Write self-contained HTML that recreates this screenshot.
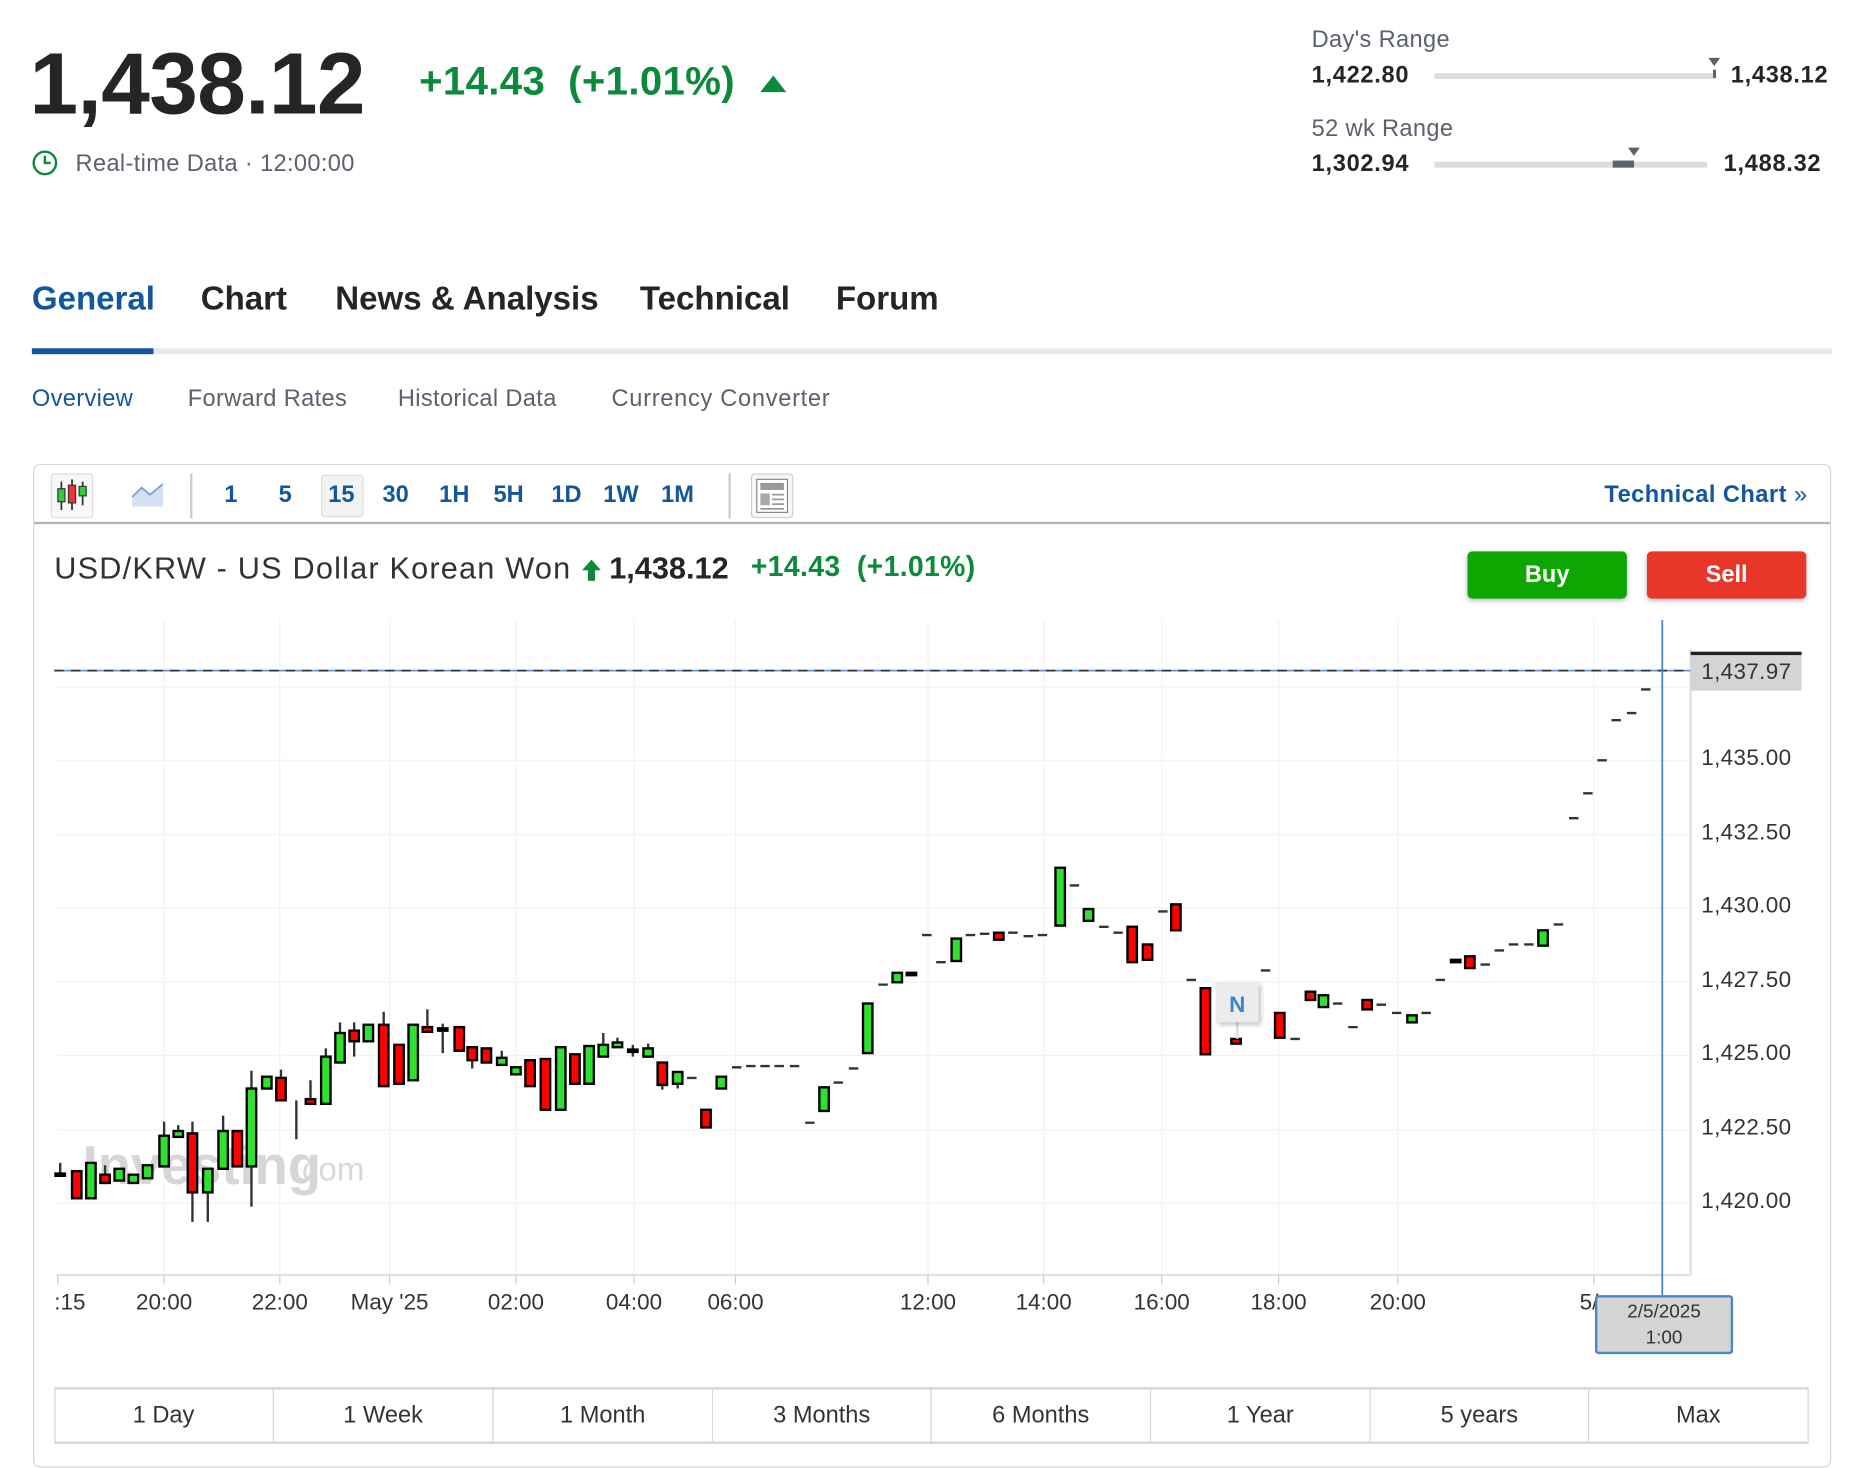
<!DOCTYPE html>
<html><head><meta charset="utf-8">
<style>
*{margin:0;padding:0;box-sizing:border-box}
html,body{width:1852px;height:1464px;overflow:hidden;background:#fff;font-family:"Liberation Sans",Arial,sans-serif}
#w{position:absolute;left:0;top:0;width:1569px;height:1240px;transform:scale(1.1806,1.1806);transform-origin:0 0}
.a{position:absolute;white-space:nowrap}
.gr{color:#0a8a3a}
.tab{font-size:28px;font-weight:bold;color:#232526;top:237px}
.sub{font-size:20px;color:#5b616e;top:327px;letter-spacing:0.3px}
.tf{font-size:20px;font-weight:bold;color:#1256a0;top:408px}
.yl{font-size:19px;color:#333;left:1441px;letter-spacing:0.3px}
.xl{font-size:19px;color:#333;top:1093px;transform:translateX(-50%)}
.pb{position:absolute;top:1176px;height:46px;border-right:1px solid #d6d6d6;font-size:20px;color:#333;text-align:center;line-height:46px}
.rv{font-size:20px;font-weight:bold;color:#232526;letter-spacing:0.6px}
</style></head><body><div id="w">

<div class="a" style="left:25px;top:28px;font-size:74px;font-weight:bold;color:#232526;letter-spacing:-0.5px">1,438.12</div>
<div class="a gr" style="left:355px;top:50px;font-size:34px;font-weight:bold;letter-spacing:0.3px">+14.43&nbsp; (+1.01%)</div>
<svg class="a" style="left:643px;top:63px" width="24" height="16"><path d="M12 1L23 15H1Z" fill="#0a8a3a"/></svg>
<svg class="a" style="left:27px;top:127px" width="24" height="24"><circle cx="11" cy="11" r="9.5" fill="none" stroke="#0a8a3a" stroke-width="2"/><path d="M11 5V11H16" fill="none" stroke="#0a8a3a" stroke-width="2"/></svg>
<div class="a" style="left:64px;top:128px;font-size:20px;color:#5b616e;letter-spacing:0.3px">Real-time Data · 12:00:00</div>

<div class="a" style="left:1111px;top:23px;font-size:20px;color:#5b616e;letter-spacing:0.3px">Day's Range</div>
<div class="a rv" style="left:1111px;top:53px">1,422.80</div>
<div class="a" style="left:1215px;top:62px;width:238px;height:5px;background:#dadcdf"></div>
<svg class="a" style="left:1446px;top:48px" width="12" height="20"><path d="M1 1H11L6 8Z" fill="#5b616e"/><rect x="5" y="11" width="2.5" height="7" fill="#5b616e"/></svg>
<div class="a rv" style="left:1466px;top:53px">1,438.12</div>
<div class="a" style="left:1111px;top:98px;font-size:20px;color:#5b616e;letter-spacing:0.3px">52 wk Range</div>
<div class="a rv" style="left:1111px;top:128px">1,302.94</div>
<div class="a" style="left:1215px;top:137px;width:231px;height:5px;background:#dadcdf"></div>
<div class="a" style="left:1366px;top:136px;width:18px;height:6px;background:#5b616e"></div>
<svg class="a" style="left:1378px;top:124px" width="12" height="9"><path d="M1 1H11L6 8Z" fill="#5b616e"/></svg>
<div class="a rv" style="left:1460px;top:128px">1,488.32</div>

<div class="a tab" style="left:27px;color:#1256a0">General</div>
<div class="a tab" style="left:170px">Chart</div>
<div class="a tab" style="left:284px">News &amp; Analysis</div>
<div class="a tab" style="left:542px">Technical</div>
<div class="a tab" style="left:708px">Forum</div>
<div class="a" style="left:27px;top:295px;width:1525px;height:5px;background:#e6e9eb"></div>
<div class="a" style="left:27px;top:295px;width:103px;height:5px;background:#1256a0"></div>

<div class="a sub" style="left:27px;color:#1256a0">Overview</div>
<div class="a sub" style="left:159px">Forward Rates</div>
<div class="a sub" style="left:337px">Historical Data</div>
<div class="a sub" style="left:518px;letter-spacing:0.6px">Currency Converter</div>

<div class="a" style="left:28px;top:393px;width:1523px;height:850px;border:1px solid #d6d6d6;border-radius:6px"></div>
<div class="a" style="left:29px;top:442px;width:1521px;height:2px;background:#b5b5b5"></div>
<div class="a" style="left:43px;top:401px;width:36px;height:38px;border:1px solid #ddd;border-radius:3px;background:#f7f7f7"></div>
<svg class="a" style="left:43px;top:401px" width="36" height="38"><path d="M9 7V31M18 5V31M27 7V27" stroke="#333" stroke-width="1.5"/><rect x="6" y="13" width="6" height="11" fill="#3c3" stroke="#333"/><rect x="15" y="10" width="6" height="15" fill="#e33" stroke="#333"/><rect x="24" y="11" width="6" height="8" fill="#3c3" stroke="#333"/></svg>
<svg class="a" style="left:110px;top:407px" width="30" height="24"><path d="M2 14L10 6L17 12L28 3V22H2Z" fill="#d4e0f3"/><path d="M2 14L10 6L17 12L28 3" fill="none" stroke="#7c9fd6" stroke-width="1.5"/></svg>
<div class="a" style="left:161px;top:401px;width:2px;height:38px;background:#ccc"></div>
<div class="a" style="left:272px;top:402px;width:36px;height:36px;border:1px solid #ddd;border-radius:3px;background:#f3f3f3"></div>
<div class="a tf" style="left:190px">1</div>
<div class="a tf" style="left:236px">5</div>
<div class="a tf" style="left:278px">15</div>
<div class="a tf" style="left:324px">30</div>
<div class="a tf" style="left:372px">1H</div>
<div class="a tf" style="left:418px">5H</div>
<div class="a tf" style="left:467px">1D</div>
<div class="a tf" style="left:511px">1W</div>
<div class="a tf" style="left:560px">1M</div>
<div class="a" style="left:617px;top:401px;width:2px;height:38px;background:#ccc"></div>
<svg class="a" style="left:636px;top:401px" width="36" height="38"><rect x="0.5" y="0.5" width="35" height="37" rx="3" fill="#f7f7f7" stroke="#ccc"/><rect x="5" y="5" width="26" height="28" fill="#fff" stroke="#888"/><rect x="8" y="8" width="20" height="6" fill="#999"/><rect x="8" y="17" width="8" height="10" fill="#aaa"/><path d="M18 18H28M18 22H28M18 26H28M8 30H28" stroke="#999" stroke-width="1.5"/></svg>
<div class="a" style="left:1359px;top:408px;font-size:20px;font-weight:bold;color:#1256a0;letter-spacing:0.4px">Technical Chart <span style="font-weight:normal">»</span></div>

<div class="a" style="left:46px;top:466px;font-size:26px;color:#333;letter-spacing:1px">USD/KRW - US Dollar Korean Won</div>
<svg class="a" style="left:492px;top:473px" width="18" height="20"><path d="M9 1L17 10H12V19H6V10H1Z" fill="#0a8a3a"/></svg>
<div class="a" style="left:516px;top:466px;font-size:26px;font-weight:bold;color:#232526">1,438.12</div>
<div class="a gr" style="left:636px;top:467px;font-size:24px;font-weight:bold;letter-spacing:0.3px">+14.43&nbsp; (+1.01%)</div>
<div class="a" style="left:1243px;top:467px;width:135px;height:40px;background:#0ea600;border-radius:4px;color:#fff;font-size:20px;font-weight:bold;text-align:center;line-height:40px;box-shadow:0 2px 4px rgba(0,0,0,.25)">Buy</div>
<div class="a" style="left:1395px;top:467px;width:135px;height:40px;background:#e8372a;border-radius:4px;color:#fff;font-size:20px;font-weight:bold;text-align:center;line-height:40px;box-shadow:0 2px 4px rgba(0,0,0,.25)">Sell</div>

<svg class="a" style="left:0;top:0" width="1552" height="1240">
<g stroke="#f2f2f2" stroke-width="1">
<path d="M48 582H1432M48 644H1432M48 707H1432M48 769H1432M48 832H1432M48 894H1432M48 957H1432M48 1019H1432"/>
<path d="M139 525V1080M237 525V1080M330 525V1080M437 525V1080M537 525V1080M623 525V1080M786 525V1080M884 525V1080M984 525V1080M1083 525V1080M1184 525V1080M1350 525V1080"/>
</g>
<path d="M48 1080H1432M1432 550V1080" stroke="#dfe1e5" stroke-width="2"/>
<path d="M49 1080V1088M139 1080V1088M237 1080V1088M330 1080V1088M437 1080V1088M537 1080V1088M623 1080V1088M786 1080V1088M884 1080V1088M984 1080V1088M1083 1080V1088M1184 1080V1088M1350 1080V1088" stroke="#ccc"/>
<text x="70" y="1003" font-family="Liberation Sans" font-size="46" font-weight="bold" fill="#d6d6d6">Investing</text>
<text x="248" y="1000" font-family="Liberation Sans" font-size="28" fill="#d8d8d8">.com</text>
<path d="M46 568H1432" stroke="#6a95c8" stroke-width="1.5"/>
<path d="M46 568H1432" stroke="#333" stroke-width="1.5" stroke-dasharray="8 6"/>
<path d="M1408 525V1097" stroke="#4a86c5" stroke-width="1.5"/>
<g stroke="#333" stroke-width="2" fill="none">
<path d="M51 985V996M89 987V1003M139 950V962M151 953V958M163 950V1035M176 1010V1035M189 945V958M213 907V1022M238 906V913M251 932V965M263 915V931M276 888V895M288 866V875M300 866V895M325 857V868M362 855V870M375 867V892M400 898V905M425 890V896M449 898V920M511 875V885M523 879V883M536 885V895M549 884V888M561 919V923M574 918V922"/>
<path d="M620 904h8M632 903h8M644 903h8M656 903h8M669 903h8M682 951h8M706 917h8M719 905h8M744 834h8M781 792h8M793 815h8M818 792h8M830 791h8M854 790h8M867 793h8M879 792h8M906 750h8M931 785h8M943 790h8M981 772h8M1005 830h8M1068 822h8M1093 880h8M1129 850h8M1142 870h8M1166 851h8M1179 858h8M1204 858h8M1216 830h8M1254 817h8M1266 805h8M1278 800h8M1291 800h8M1316 783h8M1329 693h8M1341 672h8M1353 644h8M1365 610h8M1378 604h8M1390 584h8M582 913h8"/>
</g>
<path d="M46 995h10M370 872h10M531 890h10M767 825h10M1228 814h10" stroke="#000" stroke-width="4"/>
<g stroke="#000" stroke-width="2">
<g fill="#f00">
<rect x="61" y="992" width="8" height="23"/><rect x="85" y="995" width="8" height="7"/><rect x="159" y="960" width="8" height="50"/><rect x="197" y="958" width="8" height="30"/><rect x="234" y="913" width="8" height="19"/><rect x="259" y="931" width="8" height="4"/><rect x="296" y="873" width="8" height="9"/><rect x="321" y="868" width="8" height="52"/><rect x="334" y="885" width="8" height="33"/><rect x="358" y="870" width="8" height="4"/><rect x="385" y="870" width="8" height="20"/><rect x="396" y="887" width="8" height="11"/><rect x="408" y="888" width="8" height="12"/><rect x="445" y="898" width="8" height="22"/><rect x="458" y="897" width="8" height="43"/><rect x="483" y="893" width="8" height="25"/><rect x="557" y="900" width="8" height="19"/><rect x="594" y="940" width="8" height="15"/><rect x="842" y="790" width="8" height="6"/><rect x="955" y="785" width="8" height="30"/><rect x="968" y="800" width="8" height="13"/><rect x="992" y="766" width="8" height="22"/><rect x="1017" y="837" width="8" height="56"/><rect x="1043" y="880" width="8" height="4"/><rect x="1080" y="858" width="8" height="21"/><rect x="1106" y="840" width="8" height="7"/><rect x="1154" y="847" width="8" height="8"/><rect x="1241" y="810" width="8" height="10"/>
</g>
<g fill="#2fe02f">
<rect x="73" y="985" width="8" height="30"/><rect x="97" y="990" width="8" height="10"/><rect x="109" y="995" width="8" height="7"/><rect x="121" y="987" width="8" height="11"/><rect x="135" y="962" width="8" height="26"/><rect x="147" y="958" width="8" height="5"/><rect x="172" y="990" width="8" height="20"/><rect x="185" y="958" width="8" height="32"/><rect x="209" y="922" width="8" height="66"/><rect x="222" y="912" width="8" height="10"/><rect x="272" y="895" width="8" height="40"/><rect x="284" y="875" width="8" height="25"/><rect x="308" y="868" width="8" height="14"/><rect x="346" y="868" width="8" height="47"/><rect x="421" y="896" width="8" height="6"/><rect x="433" y="904" width="8" height="6"/><rect x="471" y="887" width="8" height="53"/><rect x="495" y="886" width="8" height="32"/><rect x="507" y="885" width="8" height="10"/><rect x="519" y="883" width="8" height="4"/><rect x="545" y="888" width="8" height="7"/><rect x="570" y="908" width="8" height="10"/><rect x="607" y="912" width="8" height="10"/><rect x="694" y="921" width="8" height="20"/><rect x="731" y="850" width="8" height="42"/><rect x="756" y="824" width="8" height="8"/><rect x="806" y="795" width="8" height="19"/><rect x="894" y="735" width="8" height="49"/><rect x="918" y="770" width="8" height="10"/><rect x="1117" y="843" width="8" height="10"/><rect x="1192" y="860" width="8" height="6"/><rect x="1303" y="788" width="8" height="13"/>
</g></g>
<path d="M1048 864V880" stroke="#ddd" stroke-width="2"/>
<rect x="1030" y="832" width="36" height="34" fill="#ececec" style="filter:drop-shadow(2px 2px 2px rgba(0,0,0,.25))"/>
<text x="1048" y="857" text-anchor="middle" font-family="Liberation Sans" font-size="19" font-weight="bold" fill="#3a86d0">N</text>
<rect x="1432" y="552" width="94" height="3" fill="#222"/>
<rect x="1432" y="555" width="94" height="30" fill="#d4d4d4"/>
</svg>
<div class="a yl" style="top:559px">1,437.97</div>
<div class="a yl" style="top:632px">1,435.00</div>
<div class="a yl" style="top:695px">1,432.50</div>
<div class="a yl" style="top:757px">1,430.00</div>
<div class="a yl" style="top:820px">1,427.50</div>
<div class="a yl" style="top:882px">1,425.00</div>
<div class="a yl" style="top:945px">1,422.50</div>
<div class="a yl" style="top:1007px">1,420.00</div>

<div class="a" style="left:46px;top:1093px;font-size:19px;color:#333">:15</div>
<div class="a xl" style="left:139px">20:00</div>
<div class="a xl" style="left:237px">22:00</div>
<div class="a xl" style="left:330px">May '25</div>
<div class="a xl" style="left:437px">02:00</div>
<div class="a xl" style="left:537px">04:00</div>
<div class="a xl" style="left:623px">06:00</div>
<div class="a xl" style="left:786px">12:00</div>
<div class="a xl" style="left:884px">14:00</div>
<div class="a xl" style="left:984px">16:00</div>
<div class="a xl" style="left:1083px">18:00</div>
<div class="a xl" style="left:1184px">20:00</div>
<div class="a" style="left:1338px;top:1093px;font-size:19px;color:#333">5/</div>
<div class="a" style="left:1351px;top:1097px;width:117px;height:50px;background:#d4d4d4;border:2px solid #4a86c5;border-radius:3px;font-size:16px;color:#333;text-align:center;line-height:22px;padding-top:2px">2/5/2025<br>1:00</div>

<div class="a" style="left:46px;top:1175px;width:1486px;height:48px;border-top:2px solid #d6d6d6;border-bottom:2px solid #d6d6d6;border-left:1px solid #d6d6d6"></div>
<div class="pb" style="left:46px;width:186px">1 Day</div>
<div class="pb" style="left:232px;width:186px">1 Week</div>
<div class="pb" style="left:418px;width:186px">1 Month</div>
<div class="pb" style="left:604px;width:185px">3 Months</div>
<div class="pb" style="left:789px;width:186px">6 Months</div>
<div class="pb" style="left:975px;width:186px">1 Year</div>
<div class="pb" style="left:1161px;width:185px">5 years</div>
<div class="pb" style="left:1346px;width:186px">Max</div>

</div></body></html>
